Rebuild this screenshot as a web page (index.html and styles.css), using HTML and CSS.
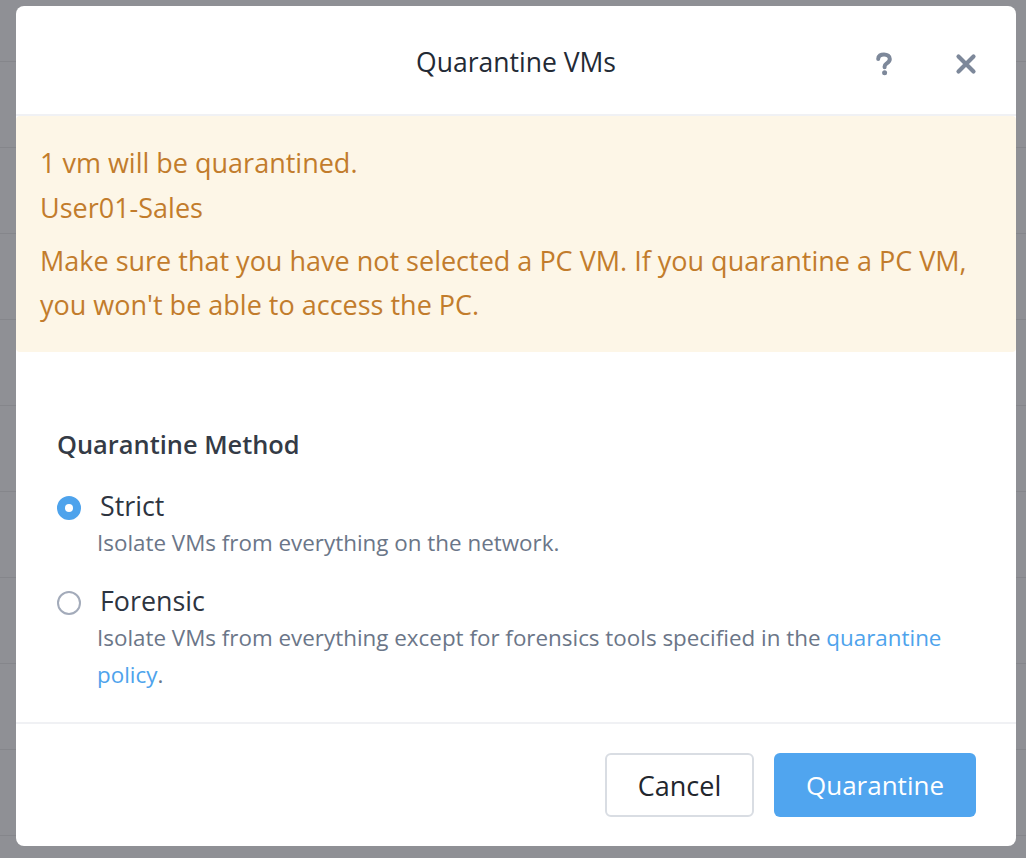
FILE: index.html
```html
<!DOCTYPE html>
<html>
<head>
<meta charset="utf-8">
<link rel="stylesheet" href="styles.css">
</head>
<body>
<div class="backdrop">
  <div class="rows">
    <div class="row"></div><div class="row"></div><div class="row"></div><div class="row"></div><div class="row"></div><div class="row"></div><div class="row"></div><div class="row"></div><div class="row"></div><div class="row"></div><div class="row"></div>
  </div>
  <div class="modal">
    <div class="modal-header">
      <div class="modal-title">Quarantine VMs</div>
      <div class="header-actions">
        <button class="icon-btn help" aria-label="Help">
          <svg width="18" height="24" viewBox="0 0 18 24"><path d="M3.2 7 C3.2 3.8 5.8 2.4 9 2.4 C12.3 2.4 14.8 4.2 14.8 7 C14.8 9.6 12.9 10.6 11.4 11.6 C10.2 12.4 9.6 13 9.6 14.6 L9.6 15.2" fill="none" stroke="#7d889a" stroke-width="4" stroke-linecap="round"/><circle cx="9.6" cy="20.8" r="2.5" fill="#7d889a"/></svg>
        </button>
        <button class="icon-btn close" aria-label="Close">
          <svg width="22" height="22" viewBox="0 0 22 22"><path d="M3.5 3.5 L18.5 18.5 M18.5 3.5 L3.5 18.5" stroke="#7d889a" stroke-width="4.2" stroke-linecap="round"/></svg>
        </button>
      </div>
    </div>
    <div class="alert">
      <p class="alert-line">1 vm will be quarantined.</p>
      <p class="alert-line">User01-Sales</p>
      <p class="alert-msg">Make sure that you have not selected a PC VM. If you quarantine a PC VM, you won't be able to access the PC.</p>
    </div>
    <div class="modal-body">
      <div class="section-title">Quarantine Method</div>
      <div class="option">
        <span class="radio checked"></span>
        <div class="option-text">
          <div class="option-label">Strict</div>
          <div class="option-desc">Isolate VMs from everything on the network.</div>
        </div>
      </div>
      <div class="option">
        <span class="radio"></span>
        <div class="option-text">
          <div class="option-label">Forensic</div>
          <div class="option-desc">Isolate VMs from everything except for forensics tools specified in the <a href="#" class="link">quarantine</a> <a href="#" class="link">policy</a>.</div>
        </div>
      </div>
    </div>
    <div class="modal-footer">
      <button class="btn btn-secondary">Cancel</button>
      <button class="btn btn-primary">Quarantine</button>
    </div>
  </div>
</div>
</body>
</html>
```
FILE: styles.css
```css
html, body {
  margin: 0;
  padding: 0;
}
body {
  width: 1026px;
  height: 858px;
  overflow: hidden;
  background: #8f9095;
  font-family: "Open Sans", "Lato", sans-serif;
}
.backdrop {
  position: relative;
  width: 1026px;
  height: 858px;
  overflow: hidden;
}
.rows {
  padding-top: 61px;
}
.row {
  height: 85px;
  border-top: 1.5px solid #85868b;
}
.modal {
  position: absolute;
  left: 16px;
  top: 6px;
  width: 1000px;
  height: 840px;
  background: #fff;
  border-radius: 8px;
  display: flex;
  flex-direction: column;
  overflow: hidden;
}
.modal-header {
  height: 108px;
  flex: none;
  display: flex;
  align-items: center;
  justify-content: center;
  position: relative;
  border-bottom: 2px solid #f0f1f4;
}
.modal-title {
  font-size: 26.5px;
  color: #232a35;
  margin-top: 4px;
}
.header-actions {
  position: absolute;
  right: 39px;
  top: 46px;
  display: flex;
  gap: 62px;
  align-items: center;
}
.icon-btn {
  background: none;
  border: 0;
  padding: 0;
  display: flex;
  cursor: pointer;
}
.alert {
  background: #fdf6e7;
  border-radius: 4px;
  padding: 24px 40px 20px 24px;
  color: #c27c2c;
  font-size: 27px;
  height: 236px;
  box-sizing: border-box;
  flex: none;
}
.alert p {
  margin: 0;
}
.alert-line {
  line-height: 45px;
}
.alert-msg {
  margin-top: 9px !important;
  line-height: 44px;
}
.modal-body {
  flex: 1;
  padding: 76px 50px 0 41px;
  border-bottom: 2px solid #f0f1f4;
}
.section-title {
  font-size: 25.4px;
  font-weight: 600;
  color: #343b46;
  line-height: 32px;
  margin-bottom: 28px;
}
.option {
  display: flex;
  gap: 20px;
  margin-bottom: 22px;
}
.radio {
  flex: none;
  width: 24px;
  height: 24px;
  box-sizing: border-box;
  border-radius: 50%;
  border: 2px solid #a3abba;
  margin-top: 8px;
  position: relative;
}
.radio.checked {
  background: #4ea3ec;
  border-color: #4ea3ec;
}
.radio.checked::after {
  content: "";
  position: absolute;
  left: 6px;
  top: 6px;
  width: 8px;
  height: 8px;
  border-radius: 50%;
  background: #fff;
}
.option-label {
  font-size: 26.8px;
  color: #2d3440;
  line-height: 36px;
  margin-left: -1px;
}
.option-desc {
  font-size: 22.4px;
  color: #6b7688;
  line-height: 37px;
  margin-left: -4px;
}
.link {
  color: #4ea3ec;
  text-decoration: none;
}
.modal-footer {
  height: 122px;
  flex: none;
  display: flex;
  justify-content: flex-end;
  align-items: flex-start;
  padding: 29px 40px 0 0;
  box-sizing: border-box;
  gap: 20px;
}
.btn {
  height: 64px;
  border-radius: 6px;
  font-family: inherit;
  font-size: 27px;
  padding: 0;
  cursor: pointer;
}
.btn-secondary {
  width: 149px;
  background: #fff;
  border: 2px solid #d9dde3;
  color: #22262d;
}
.btn-primary {
  width: 202px;
  background: #50a5ef;
  border: 0;
  color: #fff;
  font-size: 26px;
}
```
